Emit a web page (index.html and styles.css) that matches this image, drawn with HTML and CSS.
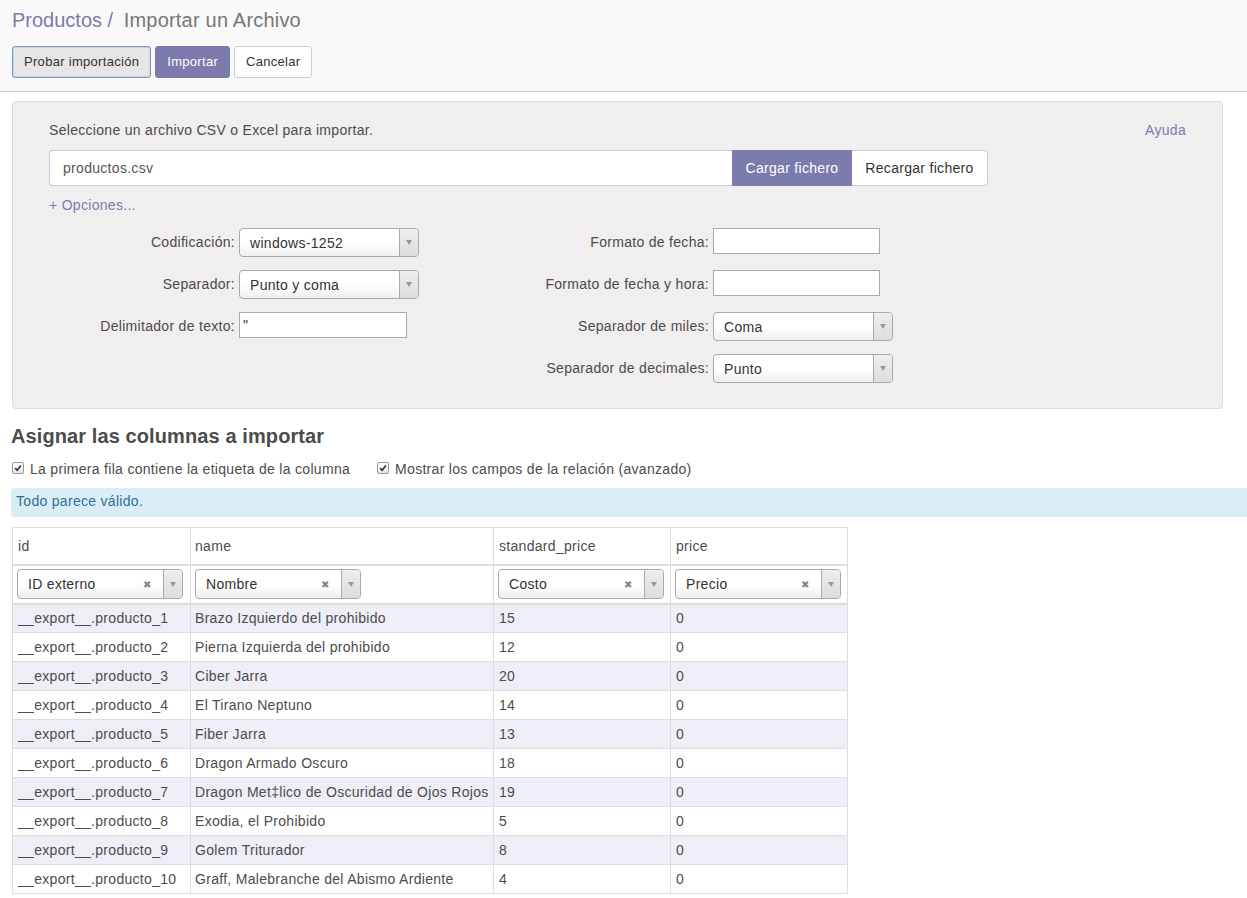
FILE: index.html
```
<!DOCTYPE html>
<html lang="es">
<head>
<meta charset="utf-8">
<title>Importar un Archivo</title>
<link rel="stylesheet" href="styles.css">
</head>
<body>
<div class="control-panel">
  <div class="breadcrumb"><span class="crumb-link">Productos</span><span class="crumb-sep"> / </span><span class="crumb-active">Importar un Archivo</span></div>
  <div class="cp-buttons">
    <button class="btn btn-default btn-focus">Probar importación</button>
    <button class="btn btn-primary">Importar</button>
    <button class="btn btn-white">Cancelar</button>
  </div>
</div>

<div class="import-panel">
  <div class="panel-top">
    <span class="lead">Seleccione un archivo CSV o Excel para importar.</span>
    <span class="help">Ayuda</span>
  </div>
  <div class="file-row">
    <div class="file-input">productos.csv</div>
    <button class="btn-file btn-primary">Cargar fichero</button>
    <button class="btn-file btn-white reload">Recargar fichero</button>
  </div>
  <div class="options-link">+ Opciones...</div>
  <div class="options-grid">
    <label class="opt-label">Codificación:</label>
    <div class="sel sel-form"><span class="sel-text">windows-1252</span><span class="sel-arrow"><i class="tri"></i></span></div>
    <label class="opt-label">Formato de fecha:</label>
    <div class="txt"></div>

    <label class="opt-label">Separador:</label>
    <div class="sel sel-form"><span class="sel-text">Punto y coma</span><span class="sel-arrow"><i class="tri"></i></span></div>
    <label class="opt-label">Formato de fecha y hora:</label>
    <div class="txt"></div>

    <label class="opt-label">Delimitador de texto:</label>
    <div class="txt txt-short">"</div>
    <label class="opt-label">Separador de miles:</label>
    <div class="sel sel-form sel-wide"><span class="sel-text">Coma</span><span class="sel-arrow"><i class="tri"></i></span></div>

    <span></span><span></span>
    <label class="opt-label">Separador de decimales:</label>
    <div class="sel sel-form sel-wide"><span class="sel-text">Punto</span><span class="sel-arrow"><i class="tri"></i></span></div>
  </div>
</div>

<h2 class="section-title">Asignar las columnas a importar</h2>
<div class="checks">
  <span class="check"><span class="cbox"><svg viewBox="0 0 10 10" width="8" height="8"><path d="M1.5 5.2 L4 7.8 L8.6 1.8" fill="none" stroke="#333" stroke-width="2"/></svg></span>La primera fila contiene la etiqueta de la columna</span>
  <span class="check"><span class="cbox"><svg viewBox="0 0 10 10" width="8" height="8"><path d="M1.5 5.2 L4 7.8 L8.6 1.8" fill="none" stroke="#333" stroke-width="2"/></svg></span>Mostrar los campos de la relación (avanzado)</span>
</div>
<div class="alert">Todo parece válido.</div>

<table class="preview">
  <colgroup><col class="c1"><col class="c2"><col class="c3"><col class="c4"></colgroup>
  <thead>
    <tr class="hdr"><th>id</th><th>name</th><th>standard_price</th><th>price</th></tr>
    <tr class="fields">
      <td><div class="sel sel-field"><span class="sel-text">ID externo</span><span class="sel-x">✖</span><span class="sel-arrow"><i class="tri"></i></span></div></td>
      <td><div class="sel sel-field"><span class="sel-text">Nombre</span><span class="sel-x">✖</span><span class="sel-arrow"><i class="tri"></i></span></div></td>
      <td><div class="sel sel-field"><span class="sel-text">Costo</span><span class="sel-x">✖</span><span class="sel-arrow"><i class="tri"></i></span></div></td>
      <td><div class="sel sel-field"><span class="sel-text">Precio</span><span class="sel-x">✖</span><span class="sel-arrow"><i class="tri"></i></span></div></td>
    </tr>
  </thead>
  <tbody>
    <tr><td>__export__.producto_1</td><td>Brazo Izquierdo del prohibido</td><td>15</td><td>0</td></tr>
    <tr><td>__export__.producto_2</td><td>Pierna Izquierda del prohibido</td><td>12</td><td>0</td></tr>
    <tr><td>__export__.producto_3</td><td>Ciber Jarra</td><td>20</td><td>0</td></tr>
    <tr><td>__export__.producto_4</td><td>El Tirano Neptuno</td><td>14</td><td>0</td></tr>
    <tr><td>__export__.producto_5</td><td>Fiber Jarra</td><td>13</td><td>0</td></tr>
    <tr><td>__export__.producto_6</td><td>Dragon Armado Oscuro</td><td>18</td><td>0</td></tr>
    <tr><td>__export__.producto_7</td><td>Dragon Met‡lico de Oscuridad de Ojos Rojos</td><td>19</td><td>0</td></tr>
    <tr><td>__export__.producto_8</td><td>Exodia, el Prohibido</td><td>5</td><td>0</td></tr>
    <tr><td>__export__.producto_9</td><td>Golem Triturador</td><td>8</td><td>0</td></tr>
    <tr><td>__export__.producto_10</td><td>Graff, Malebranche del Abismo Ardiente</td><td>4</td><td>0</td></tr>
  </tbody>
</table>
</body>
</html>
```

FILE: styles.css
```
* { box-sizing: border-box; }
html, body { margin: 0; padding: 0; background: #fff; }
body {
  font-family: "Liberation Sans", Arial, sans-serif;
  font-size: 14px;
  letter-spacing: 0.3px;
  color: #4c4c4c;
  width: 1247px;
  overflow: hidden;
}
button { font-family: inherit; font-size: 14px; letter-spacing: 0.3px; cursor: pointer; }

.control-panel {
  background: #f9f9f9;
  border-bottom: 1px solid #cacaca;
  height: 92px;
  padding: 8px 12px 0 12px;
}
.breadcrumb { font-size: 20px; line-height: 24px; color: #777; letter-spacing: 0; }
.crumb-link { color: #7c7bad; }
.crumb-sep { color: #7c7bad; }
.crumb-active { color: #777; margin-left: 5px; letter-spacing: 0.2px; }
.cp-buttons { display: flex; gap: 4px; margin-top: 14px; }
.btn {
  height: 32px;
  padding: 0 11px;
  border-radius: 3px;
  border: 1px solid #ccc;
  line-height: 30px;
  font-size: 13px;
}
.btn-default { background: #e6e6e6; color: #333; }
.btn-focus { border-color: #7f97b6; box-shadow: inset 0 0 0 1px rgba(110,140,180,.2); }
.btn-primary { background: #7c7bad; border-color: #7c7bad; color: #fff; }
.btn-white { background: #fff; color: #333; }

.import-panel {
  margin: 9px 24px 0 12px;
  background: #f0eeee;
  border: 1px solid #dcdcdc;
  border-radius: 4px;
  padding: 20px 36px 25px 36px;
  height: 308px;
}
.panel-top { display: flex; justify-content: space-between; line-height: 17px; }
.help { color: #7c7bad; }
.file-row { display: flex; margin-top: 11px; height: 36px; }
.file-input {
  width: 683px;
  background: #fff;
  border: 1px solid #ccc;
  border-right: none;
  border-radius: 4px 0 0 4px;
  padding: 0 13px;
  line-height: 34px;
  color: #555;
}
.btn-file {
  height: 36px;
  border: 1px solid #ccc;
  padding: 0 10px;
  font-size: 14px;
}
.btn-file.btn-primary { border-color: #7c7bad; width: 120px; border-radius: 0; }
.btn-file.reload { border-left: none; border-radius: 0 4px 4px 0; width: 136px; }
.options-link { color: #7c7bad; margin-top: 10px; line-height: 18px; }

.options-grid {
  display: grid;
  grid-template-columns: 186px 180px 286px 180px;
  grid-auto-rows: 29px;
  column-gap: 4px;
  row-gap: 13px;
  align-items: start;
  margin-top: 14px;
}
.opt-label { text-align: right; white-space: nowrap; line-height: 28px; }
.txt {
  width: 167px;
  height: 26px;
  background: #fff;
  border: 1px solid #aaa;
  line-height: 24px;
  padding: 0 3px;
  color: #333;
}
.txt-short { width: 168px; height: 26px; }

.sel {
  display: flex;
  align-items: stretch;
  background: linear-gradient(#fff 0%, #fff 50%, #eee 100%);
  border: 1px solid #aaa;
  border-radius: 4px;
  color: #333;
  overflow: hidden;
}
.sel-form { width: 180px; height: 29px; }
.sel-wide { width: 180px; }
.sel-text { flex: 1; padding-left: 10px; line-height: 28px; white-space: nowrap; }
.sel-arrow {
  width: 19px;
  border-left: 1px solid #aaa;
  background: linear-gradient(#eee, #ddd);
  display: flex;
  align-items: center;
  justify-content: center;
}
.tri {
  width: 0; height: 0;
  border-left: 3px solid transparent;
  border-right: 3px solid transparent;
  border-top: 5px solid #999;
}
.sel-x { color: #888; font-size: 10px; line-height: 28px; padding-right: 12px; padding-top: 1px; }

.section-title {
  font-size: 20px;
  font-weight: bold;
  letter-spacing: 0.1px;
  color: #4c4c4c;
  margin: 15px 0 0 11px;
  line-height: 24px;
}
.checks { display: flex; gap: 27px; margin: 12px 0 0 12px; line-height: 18px; }
.check { display: flex; align-items: center; }
.cbox {
  width: 12px; height: 12px;
  border: 1px solid #999;
  border-radius: 2px;
  background: linear-gradient(#fff, #e6e6e6);
  display: inline-flex;
  align-items: center;
  justify-content: center;
  margin-right: 6px;
  position: relative;
  top: -1px;
}
.alert {
  margin: 10px 0 0 11px;
  background: #d9edf7;
  color: #31708f;
  height: 29px;
  line-height: 27px;
  padding: 0 5px;
  border-radius: 4px 0 0 4px;
}

.preview {
  margin: 10px 0 0 12px;
  border-collapse: collapse;
  width: 835px;
  table-layout: fixed;
}
.c1 { width: 178px; }
.c2 { width: 303px; }
.c3 { width: 177px; }
.c4 { width: 177px; }
.preview th, .preview td {
  border: 1px solid #ddd;
  text-align: left;
  font-weight: normal;
  padding: 0 5px;
  white-space: nowrap;
  overflow: hidden;
  color: #4c4c4c;
}
.preview tr.hdr th { height: 37px; border-bottom-width: 2px; }
.preview tr.fields td { height: 39px; padding: 0 4px; border-bottom-width: 2px; }
.preview td:nth-child(2), .preview th:nth-child(2) { padding-left: 4px; }
.preview tbody td { height: 29px; }
.preview tbody tr:nth-child(odd) td { background: #eeeef6; }
.sel-field { width: 166px; height: 30px; }
.sel-field .sel-text { line-height: 28px; }
```
